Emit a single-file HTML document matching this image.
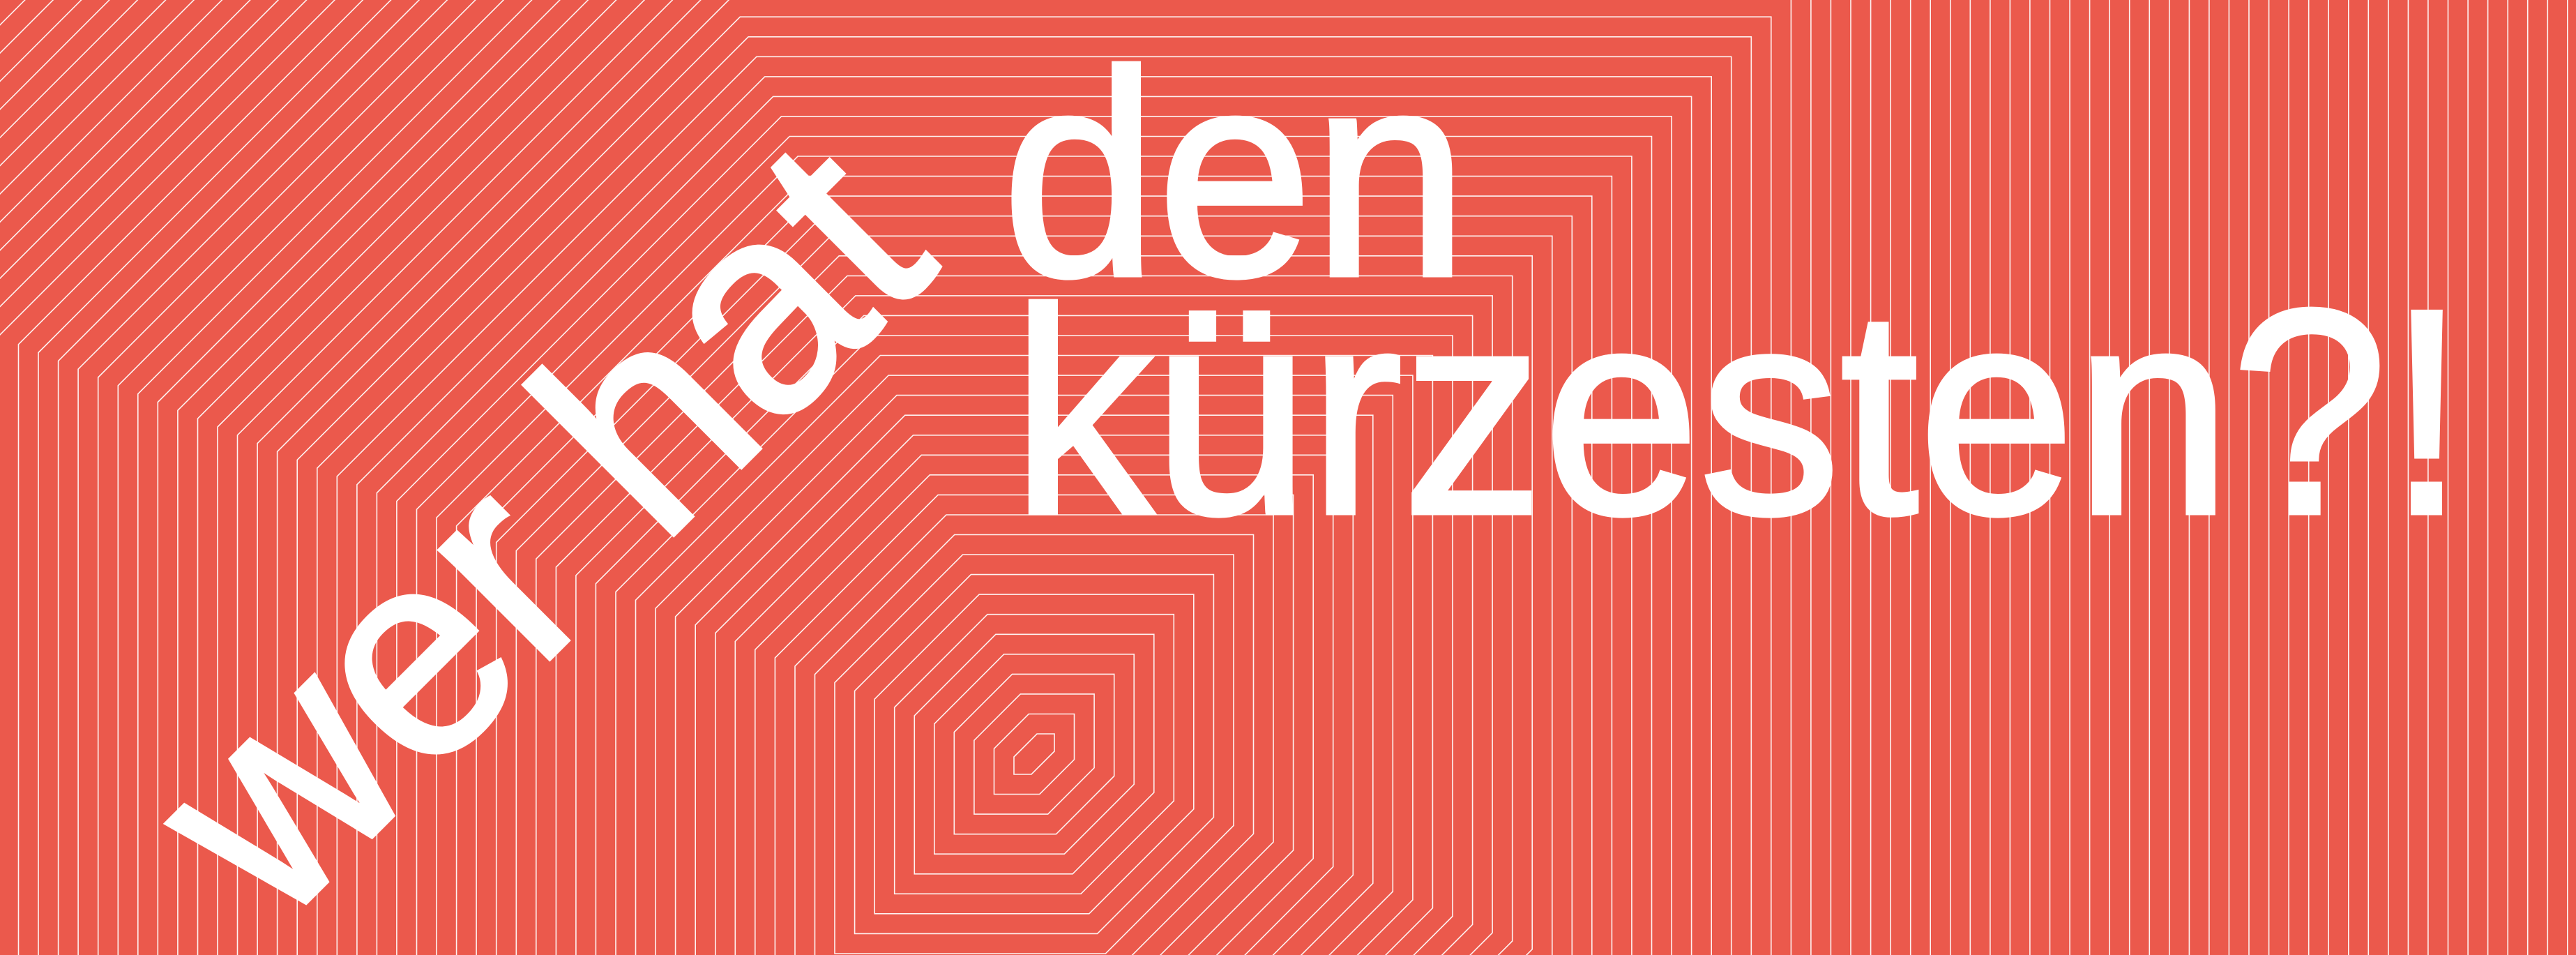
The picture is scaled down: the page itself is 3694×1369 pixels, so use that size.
<!DOCTYPE html>
<html><head><meta charset="utf-8"><style>
html,body{margin:0;padding:0;background:#eb594c;overflow:hidden;width:3694px;height:1369px}
svg{display:block}
text{font-family:"Liberation Sans",sans-serif;fill:#fff;stroke:#fff;stroke-width:7;stroke-linejoin:miter}
</style></head><body>
<svg id="s" width="3694" height="1369" viewBox="0 0 3694 1369" xmlns="http://www.w3.org/2000/svg">
<rect width="3694" height="1369" fill="#eb594c"/>
<g id="rings" fill="none" stroke="#fff" stroke-width="1.6" stroke-opacity="0.92"></g>
<text x="1437" y="394" font-size="418" textLength="668" lengthAdjust="spacingAndGlyphs">den</text>
<text x="1451" y="735" font-size="418" textLength="2085" lengthAdjust="spacingAndGlyphs">kürzesten?!</text>
<text x="396" y="1336" font-size="418" textLength="1350" lengthAdjust="spacingAndGlyphs" transform="rotate(-45 396 1336)">wer hat</text>
</svg>
<script>
(function(){
var g=document.getElementById('rings');var d=28.55,s2=d*Math.SQRT2,out='';
for(var k=0;k<140;k++){
var L=1454-d*k,R=1512+d*k,T=1052-d*k,B=1110+d*k,tl=2539-s2*k,br=2589+s2*k;
var p=[[L,tl-L],[tl-T,T],[R,T],[R,br-R],[br-B,B],[L,B]];
out+='<polygon points="'+p.map(function(q){return q[0].toFixed(1)+','+q[1].toFixed(1)}).join(' ')+'"/>';
}
g.innerHTML=out;
})();
</script>
</body></html>
